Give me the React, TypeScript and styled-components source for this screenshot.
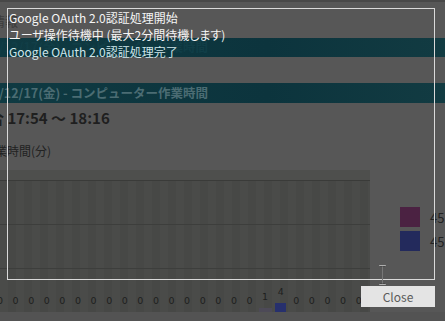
import React from "react";
import styled, { createGlobalStyle } from "styled-components";

const Global = createGlobalStyle`
  html, body { margin: 0; padding: 0; }
  body {
    width: 445px;
    height: 321px;
    overflow: hidden;
    background: #575757;
    font-family: "Noto Sans CJK JP", "Noto Sans", sans-serif;
  }
`;

const Screen = styled.div`
  position: relative;
  width: 445px;
  height: 321px;
  overflow: hidden;
  background: #575757;
`;

const Page = styled.div`
  display: flex;
  flex-direction: column;
  width: 445px;
  height: 321px;
  overflow: hidden;
`;

const TopStrip = styled.div`
  height: 2px;
  background: #484848;
`;

const HeadArea = styled.div`
  height: 36px;
  display: flex;
  align-items: center;
`;

const FaintText = styled.span<{ $shift: number; $color: string; $size: number; $bold?: boolean }>`
  margin-left: ${(p) => p.$shift}px;
  color: ${(p) => p.$color};
  font-size: ${(p) => p.$size}px;
  font-weight: ${(p) => (p.$bold ? 700 : 400)};
  white-space: nowrap;
  line-height: 1;
`;

const Band = styled.div<{ $h: number }>`
  height: ${(p) => p.$h}px;
  background: linear-gradient(90deg, #0f3a42 0%, #0c343d 60%, #123b42 100%);
  display: flex;
  align-items: center;
`;

const Spacer = styled.div<{ $h: number }>`
  height: ${(p) => p.$h}px;
`;

const TextRow = styled.div<{ $h: number }>`
  height: ${(p) => p.$h}px;
  display: flex;
  align-items: center;
`;

const ChartRow = styled.div`
  display: flex;
  height: 142px;
`;

const Chart = styled.div`
  width: 370px;
  flex: none;
  display: flex;
  flex-direction: column;
  background: #484947;
  background-image: repeating-linear-gradient(
    90deg,
    rgba(255, 255, 255, 0.012) 0px,
    rgba(255, 255, 255, 0.012) 8px,
    rgba(0, 0, 0, 0.02) 8px,
    rgba(0, 0, 0, 0.02) 16px
  );
`;

const ChartHead = styled.div`
  height: 10px;
  background: #4e4f4d;
  border-bottom: 1px solid #3a3b39;
`;

const ChartBody = styled.div`
  flex: 1;
  display: flex;
  flex-direction: column;
`;

const GridGap = styled.div<{ $h: number }>`
  height: ${(p) => p.$h}px;
  border-bottom: 1px solid #3d3e3c;
`;

const Bars = styled.div`
  flex: 1;
  display: flex;
  align-items: flex-end;
  margin-left: -7.8px;
`;

const Col = styled.div`
  width: 15.6px;
  flex: none;
  display: flex;
  flex-direction: column;
  align-items: center;
  justify-content: flex-end;
`;

const ValueLabel = styled.span`
  font-family: "DejaVu Sans", sans-serif;
  font-size: 9.5px;
  line-height: 10px;
  color: #1e1f1e;
  margin-bottom: 6px;
`;

const Bar = styled.div<{ $h: number; $c: string; $w: number }>`
  width: ${(p) => p.$w}px;
  height: ${(p) => p.$h}px;
  background: ${(p) => p.$c};
`;

const Legend = styled.div`
  margin-left: 30px;
  padding-top: 37px;
  display: flex;
  flex-direction: column;
  gap: 4px;
`;

const LegendItem = styled.div`
  display: flex;
  align-items: center;
  gap: 10px;
`;

const Swatch = styled.div<{ $c: string }>`
  width: 20px;
  height: 20px;
  flex: none;
  background: ${(p) => p.$c};
`;

const LegendText = styled.span`
  font-size: 13px;
  color: #222222;
  white-space: nowrap;
`;

const BottomStrip = styled.div`
  flex: 1;
  background: #535353;
`;

/* ---------- overlay dialog ---------- */

const Overlay = styled.div`
  position: absolute;
  top: 8px;
  left: 7px;
  width: 428px;
  display: flex;
  flex-direction: column;
  align-items: flex-end;
`;

const Frame = styled.div`
  box-sizing: border-box;
  width: 428px;
  height: 272px;
  border: 1px solid #d9d9d9;
  padding: 0 0 0 1px;
  align-self: stretch;
`;

const LogLine = styled.div<{ $done?: boolean }>`
  font-size: 12px;
  line-height: 17px;
  font-feature-settings: "palt";
  color: ${(p) => (p.$done ? "#cfe6ea" : "#f5f5f5")};
  white-space: nowrap;
`;

const CloseButton = styled.button`
  margin-top: 6px;
  width: 74px;
  height: 21px;
  border: none;
  padding: 0;
  background: rgba(236, 236, 236, 0.95);
  color: #5a5a5a;
  font-family: "Noto Sans CJK JP", "Noto Sans", sans-serif;
  font-size: 12px;
  line-height: 21px;
  cursor: text;
`;

const Cursor = styled.svg`
  position: absolute;
  left: 372px;
  top: 257px;
`;

const values = Array.from({ length: 24 }, (_, i) => (i === 17 ? 1 : i === 18 ? 4 : 0));

export default function App() {
  return (
    <Screen>
      <Global />
      <Page>
        <TopStrip />
        <HeadArea>
          <FaintText $shift={-8} $color="#3c3c3c" $size={13}>
            情報
          </FaintText>
        </HeadArea>
        <Band $h={19}>
          <FaintText $shift={-1} $color="#113e47" $size={12.5} $bold>
            /12/17(金) - コンピューター作業時間
          </FaintText>
        </Band>
        <Spacer $h={26} />
        <Band $h={20}>
          <FaintText $shift={-1} $color="#4b6c73" $size={12.5} $bold>
            /12/17(金) - コンピューター作業時間
          </FaintText>
        </Band>
        <TextRow $h={29}>
          <FaintText $shift={-26} $color="#1f1f1f" $size={15} $bold>
            試合 17:54 ～ 18:16
          </FaintText>
        </TextRow>
        <TextRow $h={38}>
          <FaintText $shift={-5} $color="#222222" $size={12}>
            業時間(分)
          </FaintText>
        </TextRow>
        <ChartRow>
          <Chart>
            <ChartHead />
            <ChartBody>
              <GridGap $h={43} />
              <GridGap $h={43} />
              <Bars>
                {values.map((v, i) => (
                  <Col key={i}>
                    <ValueLabel>{v}</ValueLabel>
                    <Bar
                      $h={v === 0 ? 0 : v === 1 ? 4 : 9}
                      $w={v === 1 ? 13 : 11}
                      $c={v === 1 ? "#4d4a57" : "#27306d"}
                    />
                  </Col>
                ))}
              </Bars>
            </ChartBody>
          </Chart>
          <Legend>
            <LegendItem>
              <Swatch $c="#4b2242" />
              <LegendText>45(</LegendText>
            </LegendItem>
            <LegendItem>
              <Swatch $c="#232a5c" />
              <LegendText>45(</LegendText>
            </LegendItem>
          </Legend>
        </ChartRow>
        <BottomStrip />
      </Page>
      <Overlay>
        <Frame>
          <LogLine>Google OAuth 2.0認証処理開始</LogLine>
          <LogLine>ユーザ操作待機中 (最大2分間待機します)</LogLine>
          <LogLine $done>Google OAuth 2.0認証処理完了</LogLine>
        </Frame>
        <CloseButton>Close</CloseButton>
        <Cursor width="7" height="20" viewBox="0 0 7 20">
          <path d="M0.5 0.5h6M3.5 0.5v19M0.5 19.5h6" stroke="#e8e8e8" strokeWidth="1" fill="none" />
          <path d="M1 1h5M3.5 1v18M1 19h5" stroke="#2a2a2a" strokeWidth="0.6" fill="none" />
        </Cursor>
      </Overlay>
    </Screen>
  );
}
